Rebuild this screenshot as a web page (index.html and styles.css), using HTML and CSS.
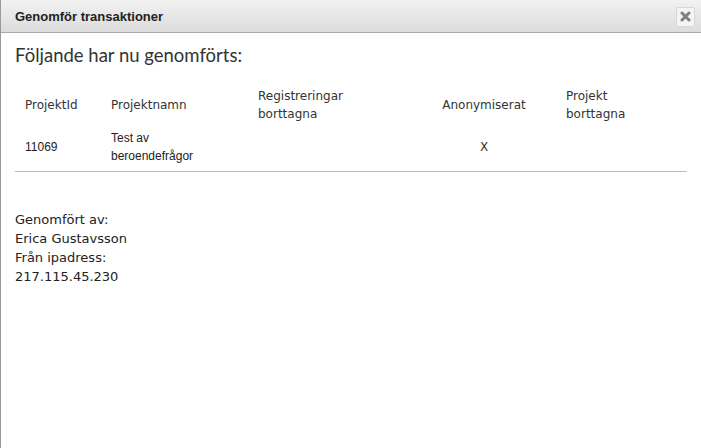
FILE: index.html
```html
<!DOCTYPE html>
<html lang="sv">
<head>
<meta charset="utf-8">
<title>Genomför transaktioner</title>
<link rel="stylesheet" href="styles.css">
</head>
<body>
<div class="dialog">
  <div class="titlebar">
    <span class="title">Genomför transaktioner</span>
    <button class="close" type="button" aria-label="Stäng">
      <svg width="11" height="11" viewBox="0 0 11 11"><path d="M2 2 L9 9 M9 2 L2 9" stroke="#808080" stroke-width="3" stroke-linecap="round"/></svg>
    </button>
  </div>
  <div class="content">
    <h2 class="heading">Följande har nu genomförts:</h2>
    <table class="result">
      <colgroup>
        <col class="c1"><col class="c2"><col class="c3"><col class="c4"><col class="c5">
      </colgroup>
      <thead>
        <tr>
          <th>ProjektId</th>
          <th>Projektnamn</th>
          <th>Registreringar<br>borttagna</th>
          <th class="center">Anonymiserat</th>
          <th>Projekt<br>borttagna</th>
        </tr>
      </thead>
      <tbody>
        <tr>
          <td>11069</td>
          <td>Test av<br>beroendefrågor</td>
          <td></td>
          <td class="center mark">X</td>
          <td></td>
        </tr>
      </tbody>
    </table>
    <div class="info">
      <div>Genomfört av:</div>
      <div>Erica Gustavsson</div>
      <div>Från ipadress:</div>
      <div>217.115.45.230</div>
    </div>
  </div>
</div>
</body>
</html>
```
FILE: styles.css
```css
* { box-sizing: border-box; }
html, body { margin: 0; padding: 0; background: #fff; }
body { width: 701px; height: 448px; overflow: hidden; }
.dialog {
  height: 448px;
  border-left: 1px solid #9a9a9a;
  background: #fff;
}
.titlebar {
  height: 33px;
  display: flex;
  align-items: center;
  justify-content: space-between;
  padding: 0 6px 0 14px;
  background: linear-gradient(#f2f2f2, #dcdcdc);
  border-bottom: 1px solid #a8a8a8;
}
.title {
  font-family: "Liberation Sans", Arial, sans-serif;
  font-weight: bold;
  font-size: 13px;
  color: #222;
}
.close {
  width: 19px;
  height: 20px;
  padding: 0;
  margin-top: 1px;
  display: flex;
  align-items: center;
  justify-content: center;
  background: #f4f4f4;
  border: 1px solid #d8d8d8;
  border-radius: 2px;
}
.content { padding: 0 14px; }
.heading {
  margin: 9px 0 0;
  font-family: Lato, "Open Sans", sans-serif;
  font-weight: normal;
  font-size: 18.5px;
  line-height: 26px;
  color: #333;
}
.result {
  margin-top: 17px;
  width: 672px;
  border-collapse: collapse;
  table-layout: fixed;
  border-bottom: 1px solid #bcbcbc;
}
.c1 { width: 86px; }
.c2 { width: 147px; }
.c3 { width: 164px; }
.c4 { width: 144px; }
.c5 { width: 131px; }
.result th {
  font-family: "DejaVu Sans", Verdana, sans-serif;
  font-weight: normal;
  font-size: 12px;
  line-height: 18px;
  color: #333;
  text-align: left;
  vertical-align: middle;
  padding: 1px 10px 1px 10px;
  height: 40px;
}
.result td {
  font-family: "Liberation Sans", Arial, sans-serif;
  font-size: 12px;
  line-height: 18px;
  color: #222;
  vertical-align: middle;
  padding: 2px 10px 3px 10px;
  height: 46px;
}
.result .center { text-align: center; }
.result td.mark { font-family: "DejaVu Sans", Verdana, sans-serif; color: #333; }
.info {
  margin-top: 38px;
  font-family: "DejaVu Sans", Verdana, sans-serif;
  font-size: 13px;
  line-height: 19px;
  color: #222;
}
```
